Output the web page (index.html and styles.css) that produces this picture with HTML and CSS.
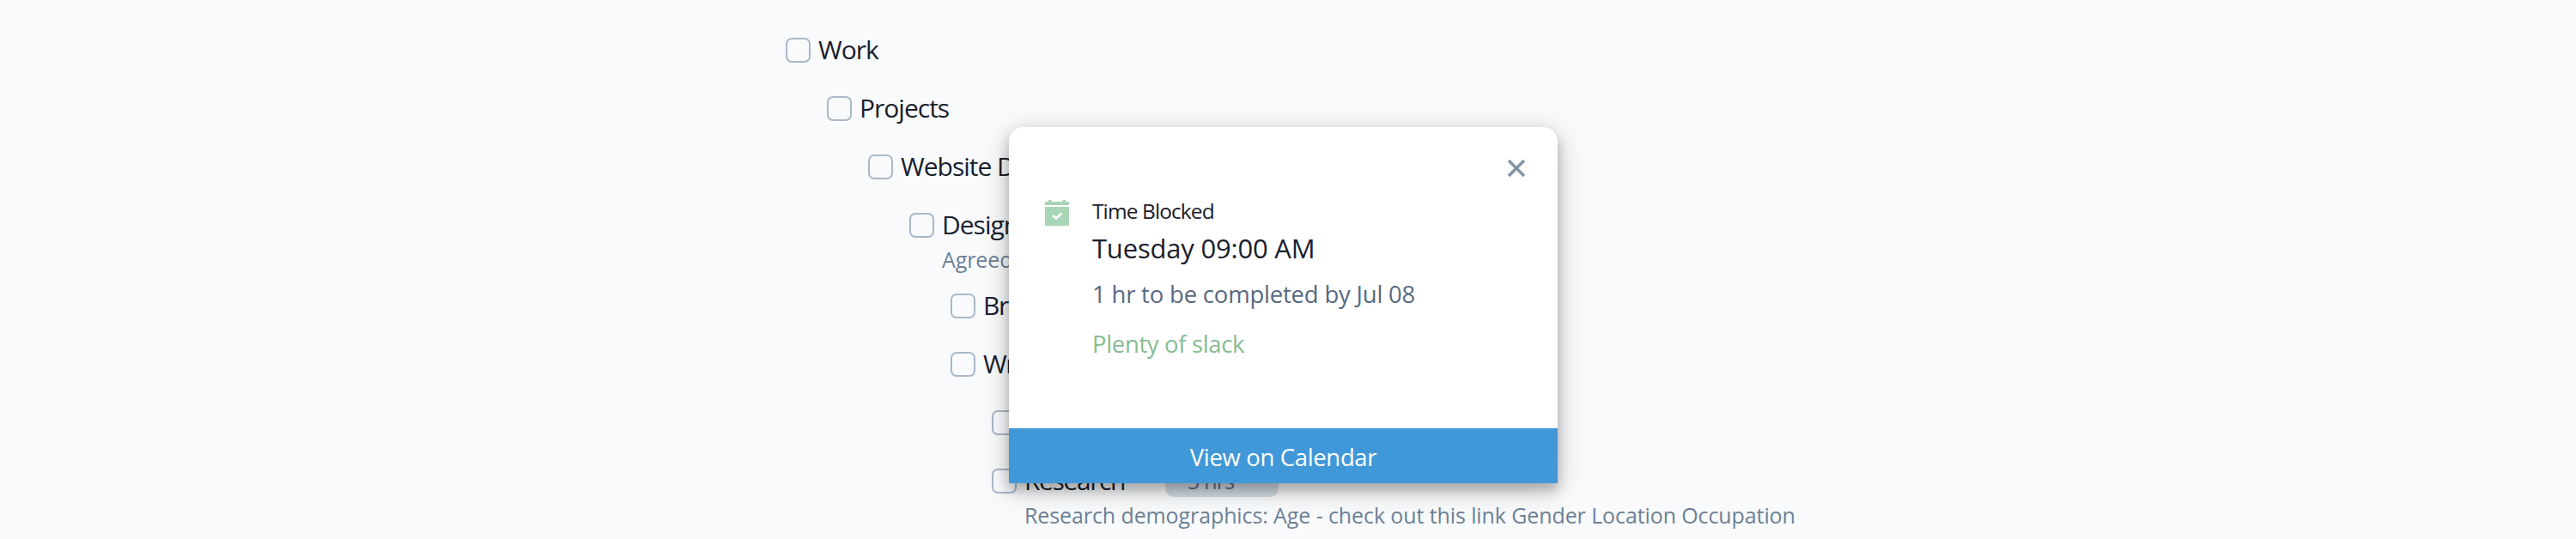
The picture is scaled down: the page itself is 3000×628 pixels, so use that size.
FILE: index.html
```html
<!DOCTYPE html>
<html>

<head>
    <title>Tasks</title>
    <link rel="stylesheet" href="styles.css">
</head>

<body>
    <div class="task-list">
        <div class="task">
            <span class="checkbox"></span>
            <span class="task-name">Work</span>
        </div>
        <div class="task level-1">
            <span class="checkbox"></span>
            <span class="task-name">Projects</span>
        </div>
        <div class="task level-2">
            <span class="checkbox"></span>
            <span class="task-name">Website Design</span>
        </div>
        <div class="task level-3">
            <span class="checkbox"></span>
            <span class="task-name">Design</span>
        </div>
        <div class="note level-3">Agreed</div>
        <div class="task level-4">
            <span class="checkbox"></span>
            <span class="task-name">Brand</span>
        </div>
        <div class="task level-4">
            <span class="checkbox"></span>
            <span class="task-name">Write</span>
        </div>
        <div class="task level-5">
            <span class="checkbox"></span>
        </div>
        <div class="task level-5">
            <span class="checkbox"></span>
            <span class="task-name">Research</span>
            <span class="duration">3 hrs</span>
        </div>
        <div class="note level-5">Research demographics: Age - check out this link Gender Location Occupation</div>
    </div>

    <div class="popup">
        <div class="popup-header">
            <svg class="close" width="20" height="20" viewBox="0 0 20 20">
                <path d="M1 1L19 19M19 1L1 19" />
            </svg>
        </div>
        <div class="popup-body">
            <svg class="calendar" width="28" height="30" viewBox="0 0 28 30">
                <path class="fill" d="M0 2H4V0H7.500V2H20.500V0H24V2H28V6H0ZM0 8H28V30H0Z" />
                <path class="check" d="M9 18L13 21.500L19.500 15.500" />
            </svg>
            <div class="details">
                <div class="label">Time Blocked</div>
                <div class="time">Tuesday 09:00 AM</div>
                <div class="due">1 hr to be completed by Jul 08</div>
                <div class="slack">Plenty of slack</div>
            </div>
        </div>
        <div class="popup-button">View on Calendar</div>
    </div>
</body>

</html>
```
FILE: styles.css
```css
body {
    margin: 0;
    height: 628px;
    overflow: hidden;
    background-color: #f8fafc;
    font-family: "Open Sans", "Noto Sans", sans-serif;
    color: #1a202c;
}

.task-list {
    padding: 24px 0 0 915px;
}

.task {
    display: flex;
    align-items: center;
    height: 68px;
}

.checkbox {
    box-sizing: border-box;
    width: 29px;
    height: 29px;
    margin-right: 9px;
    border: 2px solid #a9b8c9;
    border-radius: 7px;
}

.task-name {
    padding-bottom: 2px;
    font-size: 30px;
    letter-spacing: -1px;
}

.level-1 {
    margin-left: 48px;
}

.level-2 {
    margin-left: 96px;
}

.level-3 {
    margin-left: 144px;
}

.level-4 {
    margin-left: 192px;
}

.level-4 .task-name,
.level-5 .task-name {
    letter-spacing: -1.4px;
}

.level-5 {
    margin-left: 240px;
}

.note {
    margin-top: -7px;
    margin-bottom: 7px;
    padding-left: 38px;
    font-size: 25px;
    letter-spacing: -0.1px;
    line-height: 26px;
    color: #6d8194;
    white-space: nowrap;
}

.duration {
    box-sizing: border-box;
    width: 132px;
    height: 37px;
    margin-left: 47px;
    padding-left: 26px;
    border-radius: 10px;
    background-color: #d3dde5;
    color: #5f6c7d;
    font-size: 25px;
    letter-spacing: -0.8px;
    line-height: 37px;
}

.popup {
    position: absolute;
    left: 1175px;
    top: 148px;
    display: flex;
    flex-direction: column;
    width: 639px;
    height: 415px;
    border-radius: 17px 17px 0 0;
    background-color: #fff;
    box-shadow: 0 7px 32px rgba(0, 0, 0, 0.22), 0 8px 14px rgba(0, 0, 0, 0.22);
}

.popup-header {
    display: flex;
    justify-content: flex-end;
    height: 42px;
    padding: 38px 38px 0 0;
}

.close path {
    fill: none;
    stroke: #8495a9;
    stroke-width: 3.5;
}

.popup-body {
    display: flex;
    flex: 1;
    padding-left: 42px;
}

.calendar {
    margin: 5px 27px 0 0;
}

.calendar .fill {
    fill: #a8d5b5;
}

.calendar .check {
    fill: none;
    stroke: #fff;
    stroke-width: 2.5;
}

.label {
    font-size: 24.5px;
    letter-spacing: -0.9px;
    line-height: 35px;
}

.time {
    margin-top: 5px;
    font-size: 31px;
    letter-spacing: -0.2px;
    line-height: 42px;
}

.due {
    margin-top: 14px;
    font-size: 27.5px;
    letter-spacing: -0.2px;
    line-height: 38px;
    color: #58697f;
}

.slack {
    margin-top: 20px;
    font-size: 27.5px;
    letter-spacing: -0.35px;
    line-height: 38px;
    color: #86bd92;
}

.popup-button {
    height: 64px;
    background-color: #4198d8;
    color: #fff;
    font-size: 27.5px;
    letter-spacing: -0.35px;
    line-height: 67px;
    text-align: center;
}
```
